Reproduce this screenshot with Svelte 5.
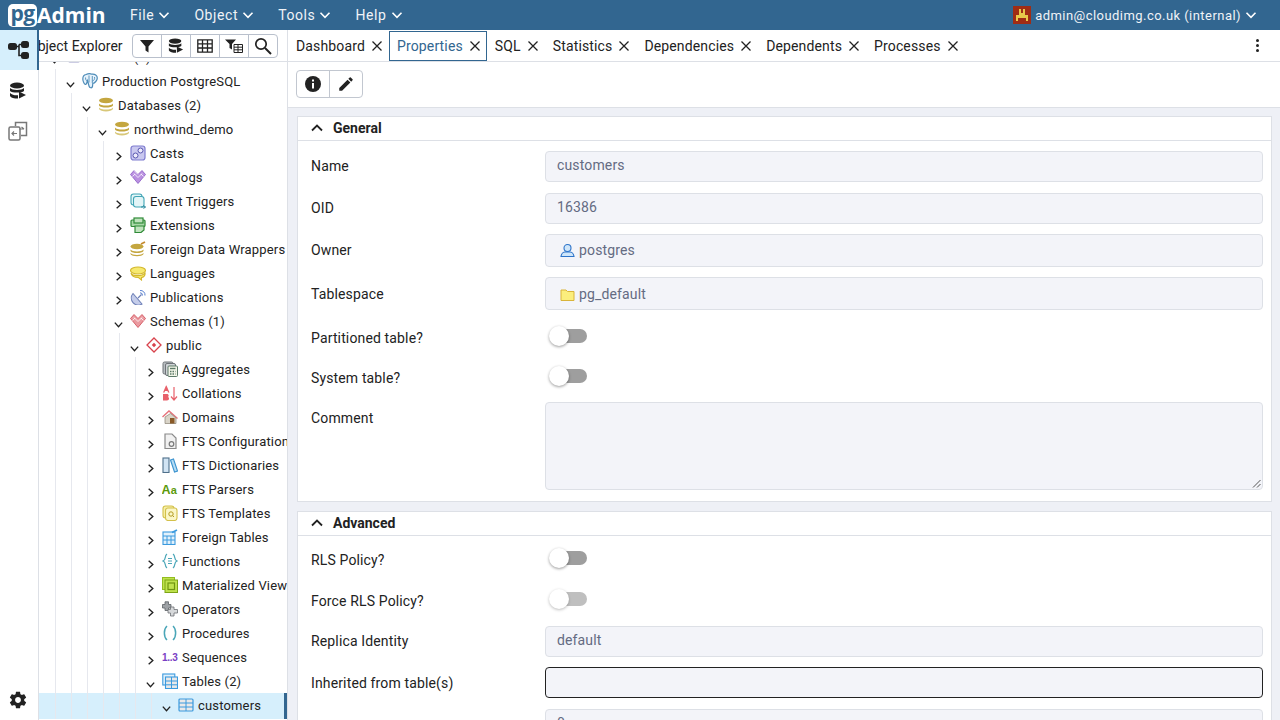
<script>
  const icons = {
    server: `<rect x="2" y="3" width="12" height="10" rx="1.5" fill="#e3e3f3" stroke="#9a9ac8"/>`,
    pg: `<path d="M4 1.500C1.500 2 .5 4.500 1 7.500 1.500 10 3 12 4 11.300 5 10.500 5 8.500 5.500 7.500L7 13C7.500 15 10 15.500 10.500 13.500L10.800 10.500C12.800 10 15.300 7.500 15.300 5 15.300 2.500 12.800 .8 10 1.200 8 .3 5.500 .8 4 1.500Z" fill="#e6f2fb" stroke="#4e8cb8" stroke-width="1.200"/><path d="M7 2.500V9.500M10.300 3V10M3.500 4.500C3.500 7 4.500 8 5.500 8M12.500 4C13 6 12 7.500 10.500 8" stroke="#4e8cb8" stroke-width=".9" fill="none"/>`,
    db: `<ellipse cx="8" cy="3.500" rx="7" ry="2.800" fill="#c4a63f"/><path d="M1 6.500C2.500 9.300 13.500 9.300 15 6.500V8.500C13.500 11.300 2.500 11.300 1 8.500Z" fill="#c4a63f"/><path d="M1 10.500C2.500 13.300 13.500 13.300 15 10.500V12C13.500 15.300 2.500 15.300 1 12Z" fill="#d8c778"/>`,
    casts: `<rect x="1" y="1" width="14" height="14" rx="2.500" fill="#c9c8ef" stroke="#7f7cd0" stroke-width="1.200"/><circle cx="5.500" cy="10.500" r="2.500" fill="#ecebfb" stroke="#5855b0"/><circle cx="10.500" cy="5.500" r="2.500" fill="#ecebfb" stroke="#5855b0"/>`,
    catalogs: `<path d="M4 1.500L8 5.500 12 1.500 15.500 5.500 8 14.500 .5 5.500Z" fill="#b990e0" stroke="#8a5ac4" stroke-width=".8"/><path d="M4 4.500L8 8.500 12 4.500M4 1.500L8 5.500M2.500 7.500L5 5M13.500 7.500L11 5" stroke="#fff" fill="none" stroke-width=".8"/>`,
    triggers: `<rect x="1" y="1" width="11" height="11" rx="2.500" fill="#e3f5f7" stroke="#41a5b5" stroke-width="1.100"/><rect x="3.500" y="3.500" width="10.500" height="10.500" rx="2.500" fill="#e3f5f7" stroke="#41a5b5" stroke-width="1.100"/><path d="M11 14H15.500M13.500 12.500L15.500 14 13.500 15.500" stroke="#2f8ca0" fill="none"/>`,
    ext: `<rect x="1" y="3" width="14" height="6.500" rx="1" fill="#a9d8a8" stroke="#2f8a37" stroke-width="1.200"/><rect x="4" y="1" width="9" height="5" fill="#bfe3bd" stroke="#2f8a37" stroke-width="1.200"/><path d="M5 9H14V13L11 15.500H5Z" fill="#bfe3bd" stroke="#2f8a37" stroke-width="1.200"/>`,
    fdw: `<ellipse cx="7" cy="5.500" rx="6.500" ry="2.800" fill="#c4a63f"/><path d="M.5 8.500C2 11 12 11 13.500 8.500V10C12 12.800 2 12.800 .5 10Z" fill="#c4a63f"/><path d="M.5 12C2 14.500 12 14.500 13.500 12V13C12 16 2 16 .5 13Z" fill="#c4a63f"/><path d="M11 3L15 1" stroke="#c48a2f" stroke-width="1.800"/>`,
    lang: `<ellipse cx="8" cy="5.500" rx="7.500" ry="3.500" fill="#f6e96f" stroke="#d3b72c" stroke-width="1.100"/><path d="M1 8C2 11.500 12.500 11.500 15 8 15.500 10.500 13.500 12.500 11.500 12.500L11.500 15 8.500 12.500C5 12.500 1.500 11.500 1 8Z" fill="#f6e96f" stroke="#d3b72c" stroke-width="1.100"/>`,
    pub: `<path d="M3 4.500A7 7 0 0 0 12 15Z" fill="#c5cdea" stroke="#6e80b8" stroke-width="1.100"/><path d="M8 9L11.500 5.500" stroke="#6e80b8" stroke-width="1.200"/><path d="M10 1.500A4.500 4.500 0 0 1 15 6.500M10 3.800A2.500 2.500 0 0 1 12.500 6.500" stroke="#5a82d0" fill="none"/>`,
    schemas: `<path d="M4 1.500L8 5.500 12 1.500 15.500 5.500 8 14.500 .5 5.500Z" fill="#ea9aa0" stroke="#cf4a54" stroke-width=".8"/><path d="M4 4.500L8 8.500 12 4.500M2.500 7.500L5 5M13.500 7.500L11 5" stroke="#fff" fill="none" stroke-width=".8"/>`,
    pub2: `<path d="M8 1L15 8 8 15 1 8Z" fill="#fff" stroke="#d8424c" stroke-width="1.300"/><path d="M8 5.800L10.200 8 8 10.200 5.800 8Z" fill="#d8424c"/>`,
    agg: `<rect x="1" y="1" width="10" height="12" rx="1.500" fill="#b8bdc1" stroke="#6f7478"/><rect x="3.500" y="2.500" width="10" height="12" rx="1.500" fill="#cfd3d6" stroke="#6f7478"/><rect x="6" y="5" width="9.500" height="10.500" rx="1" fill="#f3f5e8" stroke="#5c7a68"/><path d="M8 7.500H13.500" stroke="#5c7a68" stroke-width="1.400"/><path d="M8 10.500H13.500M8 13H13.500" stroke="#5c7a68" stroke-width="1.400" stroke-dasharray="1.500 1"/>`,
    coll: `<path d="M4.500 .5L7.500 7.500H6L5.500 6H3L2.500 7.500H1L4 .5Z" fill="#e8606a"/><path d="M1 9H5C7 9 7 11.500 6 12 7.500 12.500 7.500 15.500 5 15.500H1Z" fill="#e8606a"/><path d="M12 2V14.500M9 11.500L12 15 15 11.500" stroke="#e8606a" stroke-width="1.200" fill="none"/>`,
    dom: `<path d="M.5 8L7 2 15.500 9.500" stroke="#e6727a" stroke-width="1.400" fill="none"/><path d="M3 8V14.500H14V9L8.500 4.500Z" fill="#d9d4c8" stroke="#8a8272" stroke-width=".7"/><rect x="8" y="9" width="4.500" height="5.500" fill="#8a5a28"/>`,
    ftsc: `<path d="M3 1H10L14 5V15.500H3Z" fill="#f1f1f1" stroke="#8a8a8a" stroke-width="1.200"/><circle cx="9.500" cy="11" r="2.300" fill="none" stroke="#7a7a7a" stroke-width="1.200"/>`,
    ftsd: `<rect x="1" y="1" width="6" height="14.500" fill="#d2e4f3" stroke="#4e6f8a" stroke-width="1.100"/><path d="M8.500 3L11.500 2 15.500 14 12.500 15Z" fill="#b5dcf5" stroke="#3b93cf" stroke-width="1.100"/>`,
    ftsp: `<text x="-.5" y="13" font-family="Liberation Sans" font-size="12.500" font-weight="700" fill="#5b9a0a">A</text><text x="8.800" y="13" font-family="Liberation Sans" font-size="11" font-weight="700" fill="#5b9a0a">a</text>`,
    ftst: `<rect x="1" y="1" width="11" height="12" rx="2.500" fill="#f6f0a8" stroke="#d3c04a" stroke-width="1.100"/><rect x="3.500" y="3" width="11.500" height="12.500" rx="2.500" fill="#fbf7c8" stroke="#d3c04a" stroke-width="1.100"/><circle cx="9" cy="9" r="2.200" fill="none" stroke="#b39b20"/><path d="M10.500 10.500L12 12" stroke="#b39b20"/>`,
    ftab: `<rect x="1" y="3" width="12" height="12.500" fill="#e2f1fb" stroke="#3b9ade" stroke-width="1.100"/><path d="M1 7H13M5 7V15.500M9 7V15.500M1 11H13" stroke="#3b9ade"/><path d="M10 3.500L15 1" stroke="#3b9ade" stroke-width="1.800"/>`,
    fn: `<path d="M5 1C2 3 4.500 7 1 8 4.500 9 2 13 5 15M11 1C14 3 11.500 7 15 8 11.500 9 14 13 11 15" stroke="#4aa6b8" fill="none" stroke-width="1.200"/><path d="M6 5.500H10M6 8H10M6 10.500H10" stroke="#4aa6b8" stroke-width="1.100"/>`,
    mv: `<rect x=".5" y=".5" width="12" height="12" fill="#bfe24d" stroke="#93bd1f"/><rect x="3" y="3" width="12.500" height="12.500" fill="#bfe24d" stroke="#7da315"/><rect x="6" y="6" width="6.500" height="6.500" fill="none" stroke="#6f9510" stroke-width="1.200"/>`,
    ops: `<path d="M3 .8H6.500V3.500H9V7H6.500V9.500H3V7H.5V3.500H3Z" fill="#9ea2a6" stroke="#5c6064" stroke-width=".8"/><path d="M8.500 6H12V8.500H15.500V12H12V15H8.500V12H6V8.500H8.500Z" fill="#d7d9db" stroke="#6c7074" stroke-width=".8"/>`,
    proc: `<path d="M5 1C1.500 4 1.500 12 5 15M11 1C14.500 4 14.500 12 11 15" stroke="#4aa6b8" fill="none" stroke-width="1.500"/>`,
    seq: `<text x="0" y="12" font-family="Liberation Sans" font-size="10" font-weight="700" fill="#7a3fc4" letter-spacing="-.3">1..3</text>`,
    tables: `<rect x=".8" y="1" width="12" height="11" fill="#e2f1fb" stroke="#3b9ade" stroke-width="1.100"/><rect x="3.500" y="4" width="12" height="11.500" fill="#e9e9e9" stroke="#3b9ade" stroke-width="1.100"/><path d="M3.500 8H15.500M9.500 4V15.500M3.500 11.800H15.500" stroke="#3b9ade"/>`,
    table: `<rect x="1" y="2" width="14" height="12" rx="1" fill="#e9e9e9" stroke="#3b9ade" stroke-width="1.200"/><path d="M1 6H15M8 2V14M1 10H15" stroke="#3b9ade"/>`,
  };

  const tree = [
    [1, 'server', 'Servers (1)', 1],
    [2, 'pg', 'Production PostgreSQL', 1],
    [3, 'db', 'Databases (2)', 1],
    [4, 'db', 'northwind_demo', 1],
    [5, 'casts', 'Casts', 0],
    [5, 'catalogs', 'Catalogs', 0],
    [5, 'triggers', 'Event Triggers', 0],
    [5, 'ext', 'Extensions', 0],
    [5, 'fdw', 'Foreign Data Wrappers', 0],
    [5, 'lang', 'Languages', 0],
    [5, 'pub', 'Publications', 0],
    [5, 'schemas', 'Schemas (1)', 1],
    [6, 'pub2', 'public', 1],
    [7, 'agg', 'Aggregates', 0],
    [7, 'coll', 'Collations', 0],
    [7, 'dom', 'Domains', 0],
    [7, 'ftsc', 'FTS Configurations', 0],
    [7, 'ftsd', 'FTS Dictionaries', 0],
    [7, 'ftsp', 'FTS Parsers', 0],
    [7, 'ftst', 'FTS Templates', 0],
    [7, 'ftab', 'Foreign Tables', 0],
    [7, 'fn', 'Functions', 0],
    [7, 'mv', 'Materialized Views', 0],
    [7, 'ops', 'Operators', 0],
    [7, 'proc', 'Procedures', 0],
    [7, 'seq', 'Sequences', 0],
    [7, 'tables', 'Tables (2)', 1],
    [8, 'table', 'customers', 1, true],
  ];
  const tabs = ['Dashboard', 'Properties', 'SQL', 'Statistics', 'Dependencies', 'Dependents', 'Processes'];
  const menus = ['File', 'Object', 'Tools', 'Help'];
</script>

{#snippet chevDown(c = 'currentColor', s = 12)}
  <svg width={s} height={s} viewBox="0 0 12 12"><path d="M1.500 3.800L6 8.300 10.500 3.800" fill="none" stroke={c} stroke-width="1.600"/></svg>
{/snippet}
{#snippet cross()}
  <svg class="x" width="12" height="12" viewBox="0 0 12 12"><path d="M1.500 1.500L10.500 10.500M10.500 1.500L1.500 10.500" stroke="#222" stroke-width="1.300"/></svg>
{/snippet}

<div class="app">
  <header class="top">
    <div class="logo">
      <span class="pg">pg</span><span class="admin">Admin</span>
    </div>
    <nav class="menus">
      {#each menus as m}
        <span class="menu">{m}{@render chevDown('#fff', 12)}</span>
      {/each}
    </nav>
    <div class="user">
      <svg width="18" height="18" viewBox="0 0 18 18" shape-rendering="crispEdges"><rect width="18" height="18" fill="#a02c14"/><path d="M6 3H8V7H10V3H12V9H15V15H13V12H5V15H3V9H6Z" fill="#e8c84a"/></svg>
      <span>admin@cloudimg.co.uk (internal)</span>
      {@render chevDown('#fff', 12)}
    </div>
  </header>

  <div class="main">
    <aside class="rail">
      <div class="rail-btn active">
        <svg width="22" height="20" viewBox="0 0 22 20"><rect x="0" y="3" width="9" height="7" rx="2.500" fill="#222"/><rect x="13" y="1" width="8" height="7" rx="2.500" fill="#222"/><rect x="13" y="12" width="8" height="7" rx="2.500" fill="#222"/><path d="M8 6.500H11M11 4.500H14M11 4.500V15.500H14" stroke="#222" stroke-width="1.600" fill="none"/></svg>
      </div>
      <div class="rail-btn low">
        <svg width="18" height="18" viewBox="0 0 18 18"><ellipse cx="8" cy="3.500" rx="7" ry="3" fill="#222"/><path d="M1 6C3 8.500 13 8.500 15 6V9C13 11 3 11 1 9Z" fill="#222"/><path d="M1 11C3 13.300 7 13.500 9 13.200V16.500C5 16.500 2 16 1 14Z" fill="#222"/><path d="M10 9.500L17 13 10 16.500Z" fill="#222"/></svg>
      </div>
      <div class="rail-btn low">
        <svg width="20" height="20" viewBox="0 0 20 20"><rect x="1" y="6" width="11" height="13" rx="1.500" fill="none" stroke="#777" stroke-width="1.500"/><path d="M7.500 5V1.500H18.500V14.500H13" fill="none" stroke="#777" stroke-width="1.500"/><path d="M9 12.500H4M6 10.500L4 12.500 6 14.500M16 8H11M13.500 6L16 8" fill="none" stroke="#777" stroke-width="1.200"/></svg>
      </div>
      <div class="rail-gear">
        <svg width="20" height="20" viewBox="0 0 24 24"><path fill="#222" d="M19.430 12.980c.04-.32.07-.64.07-.98s-.03-.66-.07-.98l2.110-1.650c.19-.15.24-.42.120-.64l-2-3.460c-.12-.22-.39-.3-.61-.22l-2.490 1c-.52-.4-1.080-.73-1.690-.98l-.38-2.650C14.460 2.180 14.250 2 14 2h-4c-.25 0-.46.18-.49.420l-.38 2.650c-.61.25-1.170.59-1.690.98l-2.490-1c-.23-.09-.49 0-.61.220l-2 3.460c-.13.220-.07.490.12.640l2.110 1.650c-.04.320-.07.650-.07.980s.03.660.07.980l-2.110 1.650c-.19.150-.24.420-.12.640l2 3.460c.12.220.39.300.61.220l2.490-1c.52.400 1.080.730 1.690.980l.38 2.650c.03.240.24.420.49.420h4c.25 0 .46-.18.49-.42l.38-2.650c.61-.25 1.170-.59 1.690-.98l2.490 1c.23.090.49 0 .61-.22l2-3.460c.12-.22.070-.49-.12-.64l-2.110-1.650zM12 15.500c-1.930 0-3.500-1.570-3.500-3.500s1.570-3.500 3.500-3.500 3.500 1.570 3.500 3.500-1.570 3.500-3.500 3.500z"/></svg>
      </div>
    </aside>

    <section class="explorer">
      <div class="exp-head">
        <span class="exp-title">Object Explorer</span>
        <div class="exp-tools">
          <span class="tool"><svg width="16" height="16" viewBox="0 0 16 16"><path d="M1 2H15L9.500 8.500V14.500L6.500 12.500V8.500Z" fill="#222"/></svg></span>
          <span class="tool"><svg width="16" height="16" viewBox="0 0 18 18"><ellipse cx="8" cy="3.500" rx="7" ry="3" fill="#222"/><path d="M1 6C3 8.500 13 8.500 15 6V9C13 11 3 11 1 9Z" fill="#222"/><path d="M1 11C3 13.300 7 13.500 9 13.200V16.500C5 16.500 2 16 1 14Z" fill="#222"/><path d="M10 9.500L17 13 10 16.500Z" fill="#222"/></svg></span>
          <span class="tool"><svg width="16" height="14" viewBox="0 0 16 14"><path d="M.8.800H15.200V13.200H.8ZM.8 4.800H15.200M.8 9H15.200M5.500 .8V13.200M10.500 .8V13.200" fill="none" stroke="#222" stroke-width="1.300"/></svg></span>
          <span class="tool"><svg width="18" height="16" viewBox="0 0 18 16"><path d="M0 1.500H11L7 6V11.500L4.500 10V6Z" fill="#222"/><path d="M9 6.500H17.500V14.500H9ZM9 9.200H17.500M9 11.800H17.500M13 6.500V14.500" fill="none" stroke="#222"/></svg></span>
          <span class="tool"><svg width="18" height="18" viewBox="0 0 18 18"><circle cx="7" cy="7" r="5.200" fill="none" stroke="#222" stroke-width="1.700"/><path d="M11 11L17 17" stroke="#222" stroke-width="2"/></svg></span>
        </div>
      </div>
      <div class="tree">
        <div class="scroll">
        {#each tree as [lvl, ic, label, open, sel]}
          <div class="row" class:sel style:--lvl={lvl}>
            {#each { length: lvl - 1 } as _, g}
              <i class="guide" style:--g={g}></i>
            {/each}
            <span class="chev">
              {#if open}
                <svg width="11" height="11" viewBox="0 0 12 12"><path d="M2 4L6 8.500 10 4" fill="none" stroke="#222" stroke-width="1.500"/></svg>
              {:else}
                <svg width="11" height="11" viewBox="0 0 12 12"><path d="M4 2L8.500 6 4 10" fill="none" stroke="#222" stroke-width="1.500"/></svg>
              {/if}
            </span>
            <svg class="ic" width="16" height="16" viewBox="0 0 16 16">{@html icons[ic]}</svg>
            <span class="lbl">{label}</span>
          </div>
        {/each}
        </div>
      </div>
    </section>

    <section class="work">
      <div class="tabs">
        {#each tabs as t}
          <div class="tab" class:on={t === 'Properties'}><span>{t}</span>{@render cross()}</div>
        {/each}
        <div class="dots"><i></i><i></i><i></i></div>
      </div>
      <div class="bar">
        <div class="btns">
          <span class="b"><svg width="18" height="18" viewBox="0 0 18 18"><circle cx="9" cy="9" r="8" fill="#222"/><rect x="8" y="8" width="2" height="5.500" fill="#fff"/><rect x="8" y="4.500" width="2" height="2" fill="#fff"/></svg></span>
          <span class="b"><svg width="18" height="18" viewBox="0 0 24 24"><path fill="#222" d="M3 17.250V21h3.750L17.810 9.940l-3.750-3.750L3 17.250zM20.710 7.040a1 1 0 0 0 0-1.410l-2.340-2.340a1 1 0 0 0-1.410 0l-1.830 1.830 3.750 3.750 1.830-1.830z"/></svg></span>
        </div>
      </div>
      <div class="content">
        <div class="panel general">
          <div class="ph"><svg width="12" height="12" viewBox="0 0 12 12"><path d="M1 8.500L6 3.500 11 8.500" fill="none" stroke="#222" stroke-width="1.800"/></svg><b>General</b></div>
          <div class="form">
            <div class="fr h42"><label>Name</label><div class="inp">customers</div></div>
            <div class="fr h42"><label>OID</label><div class="inp">16386</div></div>
            <div class="fr h42"><label>Owner</label><div class="inp tall"><svg class="fi" width="15" height="15" viewBox="0 0 15 15"><circle cx="7.500" cy="5" r="3.500" fill="#cfe6fa" stroke="#2e74c9" stroke-width="1.100"/><path d="M1 13.500C1.500 10 4 9 5 9H10C11 9 13.500 10 14 13.500Z" fill="#cfe6fa" stroke="#2e74c9" stroke-width="1.100"/></svg>postgres</div></div>
            <div class="fr h45"><label>Tablespace</label><div class="inp tall ts"><svg class="fi" width="15" height="15" viewBox="0 0 15 15"><path d="M1 3H6L7.500 4.500H14V13.500H1Z" fill="#fbee7d" stroke="#d9b43a"/></svg>pg_default</div></div>
            <div class="fr h40 first-sw"><label>Partitioned table?</label><span class="sw"><i></i></span></div>
            <div class="fr h40"><label>System table?</label><span class="sw"><i></i></span></div>
            <div class="fr area"><label>Comment</label><div class="inp ta"><svg class="grip" width="9" height="9" viewBox="0 0 9 9"><path d="M8.500 1L1 8.500M8.500 5L5 8.500" stroke="#555" stroke-width="1"/></svg></div></div>
          </div>
        </div>
        <div class="panel adv">
          <div class="ph"><svg width="12" height="12" viewBox="0 0 12 12"><path d="M1 8.500L6 3.500 11 8.500" fill="none" stroke="#222" stroke-width="1.800"/></svg><b>Advanced</b></div>
          <div class="form">
            <div class="fr h40"><label>RLS Policy?</label><span class="sw"><i></i></span></div>
            <div class="fr h41"><label>Force RLS Policy?</label><span class="sw dim"><i></i></span></div>
            <div class="fr h40"><label>Replica Identity</label><div class="inp">default</div></div>
            <div class="fr h42"><label class="nudge">Inherited from table(s)</label><div class="inp focus"></div></div>
            <div class="fr h42"><label class="nudge-last">Inherited tables count</label><div class="inp">0</div></div>
          </div>
        </div>
      </div>
    </section>
  </div>
</div>

<style>
  :global(body) { margin: 0; font-family: Roboto, "Liberation Sans", sans-serif; color: #222; }
  .app { width: 1280px; height: 720px; display: flex; flex-direction: column; overflow: hidden; background: #fff; font-size: 14px; letter-spacing: .14px; }

  .top { height: 30px; flex: none; background: #326690; color: #fff; display: flex; align-items: center; padding: 0 23px 0 8px; box-sizing: border-box; }
  .logo { display: flex; align-items: center; width: 122px; font-family: "Open Sans", sans-serif; font-weight: 700; line-height: 1; letter-spacing: 0; }
  .pg { background: #fff; color: #326690; font-size: 21px; height: 23px; width: 29px; border-radius: 5px; display: flex; align-items: center; justify-content: center; padding-bottom: 4px; box-sizing: border-box; flex: none; letter-spacing: -.5px; }
  .admin { font-size: 21px; }
  .menus { display: flex; gap: 24px; font-size: 14px; letter-spacing: .6px; }
  .menu { display: flex; align-items: center; gap: 4px; color: #f0f3f7; }
  .user { margin-left: auto; display: flex; align-items: center; gap: 4px; color: #f0f3f7; font-size: 13px; letter-spacing: .45px; }

  .main { flex: 1; display: flex; min-height: 0; }
  .rail { width: 39px; flex: none; box-sizing: border-box; border-right: 1px solid #dde0e6; display: flex; flex-direction: column; background: #fff; }
  .rail-btn { height: 40px; display: flex; align-items: center; justify-content: center; box-sizing: border-box; padding-right: 2px; }
  .rail-btn.low { padding-top: 2px; }
  .rail-btn.active { background: #d6effc; border-right: 2px solid #326690; padding-right: 0; margin-right: -1px; }
  .rail-gear { margin-top: auto; height: 40px; display: flex; align-items: center; justify-content: center; padding-right: 2px; }

  .explorer { width: 249px; flex: none; box-sizing: border-box; border-right: 1px solid #dde0e6; display: flex; flex-direction: column; overflow: hidden; }
  .exp-head { height: 32px; flex: none; display: flex; align-items: center; box-sizing: border-box; border-bottom: 1px solid #dde0e6; margin-left: -11px; white-space: nowrap; letter-spacing: 0; }
  .exp-title { width: 104px; flex: none; font-size: 14px; }
  .exp-tools { display: flex; height: 24px; border: 1px solid #b9c0cc; border-radius: 4px; box-sizing: border-box; }
  .tool { width: 29px; display: flex; align-items: center; justify-content: center; border-left: 1px solid #b9c0cc; box-sizing: border-box; }
  .tool:first-child { border-left: 0; width: 28px; }

  .tree { flex: 1; overflow: hidden; min-height: 0; }
  .scroll { margin-top: -17px; }
  .row { height: 24px; display: flex; align-items: center; position: relative; padding-left: calc(var(--lvl) * 16px - 8px); white-space: nowrap; font-size: 13px; letter-spacing: .16px; }
  .row.sel { background: #d6effc; box-shadow: inset -3px 0 0 #326690; height: 26px; padding-bottom: 2px; box-sizing: border-box; }
  .guide { position: absolute; top: 0; bottom: 0; left: calc(var(--g) * 16px + 16px); width: 1px; background: #e6e8ee; }
  .chev { width: 16px; height: 16px; flex: none; display: flex; align-items: center; justify-content: center; margin: 6px 1px 0 -1px; }
  .ic { flex: none; margin-left: 3px; margin-right: 4px; }

  .work { flex: 1; min-width: 0; display: flex; flex-direction: column; }
  .tabs { height: 32px; flex: none; display: flex; align-items: stretch; border-bottom: 1px solid #dde0e6; box-sizing: border-box; position: relative; white-space: nowrap; }
  .tab { display: flex; align-items: center; gap: 6px; padding: 0 5px 0 7px; border: 1px solid transparent; box-sizing: border-box; }
  .tab.on { color: #326690; border: 1px solid #326690; height: 30px; margin-top: 1px; }
  .dots { position: absolute; right: 21px; top: 9px; display: flex; flex-direction: column; gap: 2px; }
  .dots i { width: 3px; height: 3px; border-radius: 50%; background: #222; }
  .bar { height: 45px; flex: none; display: flex; align-items: center; box-sizing: border-box; padding: 0 0 1px 8px; }
  .btns { display: flex; height: 28px; border: 1px solid #c2c7d0; border-radius: 4px; box-sizing: border-box; }
  .b { width: 32px; display: flex; align-items: center; justify-content: center; box-sizing: border-box; }
  .b + .b { border-left: 1px solid #c2c7d0; width: 33px; }

  .content { flex: 1; min-height: 0; background: #eef0f6; border-top: 1px solid #dde0e6; padding: 8px 8px 0 9px; overflow: hidden; display: flex; flex-direction: column; gap: 9px; }
  .panel { background: #fff; flex: none; box-sizing: border-box; border: 1px solid #dde0e6; border-bottom: 0; }
  .general { height: 386px; border-bottom: 1px solid #dde0e6; }
  .ph { height: 24px; display: flex; align-items: center; gap: 10px; padding: 0 0 2px 13px; border-bottom: 1px solid #dde0e6; box-sizing: border-box; }
  .ph b { font-weight: 700; font-size: 14px; letter-spacing: 0; }
  .form { padding: 4px 8px 0 13px; }
  .fr { display: flex; align-items: center; }
  .fr label { width: 234px; flex: none; font-size: 14px; }
  .fr label.nudge { padding-top: 2px; }
  .fr label.nudge-last { padding-top: 7px; }
  .first-sw { margin-top: 2px; }
  .h40 { height: 40px; }
  .h41 { height: 41px; }
  .h42 { height: 42px; }
  .h45 { height: 45px; }
  .inp { flex: 1; height: 31px; box-sizing: border-box; background: #f3f4f9; border: 1px solid #dde0e6; border-radius: 4px; color: #646b82; padding: 0 11px 2px; display: flex; align-items: center; font-size: 14px; line-height: 1; }
  .inp.tall { height: 33px; padding-left: 14px; padding-bottom: 1px; }
  .inp.tall.ts { padding-bottom: 0; }
  .fi { margin-right: 4px; margin-top: 1px; }
  .inp.focus { border: 1px solid #222; }
  .area { align-items: flex-start; height: 88px; margin-top: 4px; }
  .area label { padding-top: 8px; }
  .inp.ta { height: 88px; position: relative; }
  .grip { position: absolute; right: 1px; bottom: 1px; }
  .sw { margin-left: 5px; width: 37px; height: 14px; background: #9e9e9e; border-radius: 7px; position: relative; display: block; margin-top: -4px; }
  .sw i { position: absolute; left: -1px; top: -3px; width: 20px; height: 20px; border-radius: 50%; background: #fff; box-shadow: 0 1px 3px rgba(0,0,0,.4); }
  .sw.dim { opacity: .65; }
</style>
